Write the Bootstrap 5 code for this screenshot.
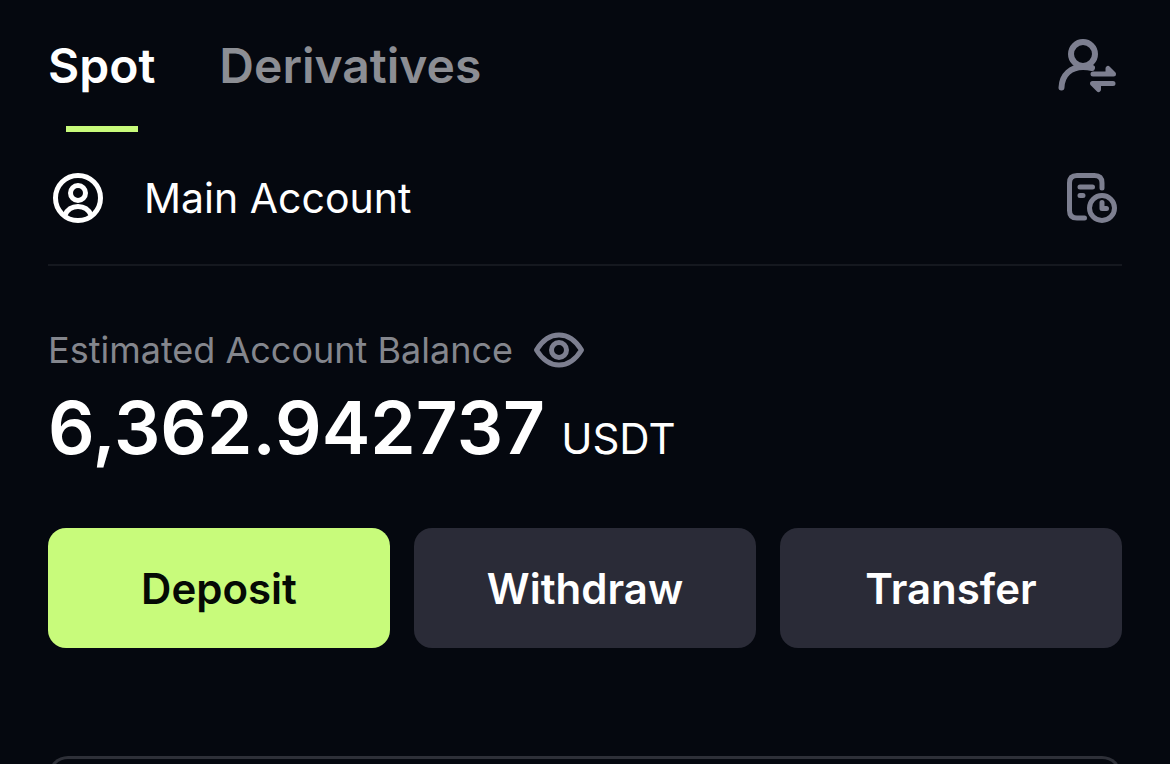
<!DOCTYPE html>
<html lang="en" data-bs-theme="dark">
<head>
<meta charset="utf-8">
<meta name="viewport" content="width=device-width, initial-scale=1">
<title>Spot Account</title>
<link rel="stylesheet" href="https://cdn.jsdelivr.net/npm/bootstrap@5.3.0/dist/css/bootstrap.min.css">
<style>
  html { scrollbar-width: none; }
  html::-webkit-scrollbar { display: none; }
  body { background: #05080f; color: #fff; font-family: Inter, "Liberation Sans", sans-serif; }
  .wallet { padding: 32px 48px 0; }
  .tabs { gap: 64px; }
  .tab-link { position: relative; color: #8c8e94; font-size: 48px; font-weight: 600; line-height: 68px; height: 100px; }
  .tab-link:hover { color: #fff; }
  .tab-link.active { color: #fff; }
  .tab-link.active::after { content: ""; position: absolute; bottom: 0; left: 50%; width: 72px; height: 6px; margin-left: -36px; background: #c8fb7b; }
  .icon-btn { color: #7d7f90; }
  .icon-btn svg, .avatar { display: block; }
  .account-row { height: 134px; border-bottom: 2px solid #15181f; }
  .account-name { font-size: 41px; line-height: 50px; gap: 38px; }
  .balance { padding-top: 62px; }
  .balance-label { color: #84868d; font-size: 36px; line-height: 44px; }
  .balance-value { margin-top: 12px; }
  .amount { font-size: 73px; font-weight: 600; line-height: 88px; }
  .unit { font-size: 42px; line-height: 48px; }
  .actions { gap: 24px; margin-top: 56px; }
  .action-btn { --bs-btn-color: #fff; --bs-btn-bg: #2a2b37; --bs-btn-hover-color: #fff; --bs-btn-hover-bg: #353746; height: 120px; font-size: 42px; font-weight: 600; border: 0; border-radius: 18px; }
  .action-btn.deposit { --bs-btn-color: #050a05; --bs-btn-bg: #c8fb7b; --bs-btn-hover-color: #050a05; --bs-btn-hover-bg: #b8ee68; }
  .assets-panel { margin-top: 108px; min-height: 96px; border: 3px solid #2e3038; border-bottom: 0; border-radius: 20px 20px 0 0; }
</style>
</head>
<body>
<main class="wallet d-flex flex-column min-vh-100">
  <header class="d-flex justify-content-between align-items-start">
    <nav class="tabs d-flex" aria-label="Account type">
      <a class="tab-link active text-decoration-none" href="#spot" aria-current="page">Spot</a>
      <a class="tab-link text-decoration-none" href="#derivatives">Derivatives</a>
    </nav>
    <button type="button" class="icon-btn btn border-0 p-0 mt-1" aria-label="Switch account">
      <svg width="64" height="60" viewBox="0 0 64 60" fill="none" stroke="currentColor" stroke-width="6" stroke-linecap="round" stroke-linejoin="round">
        <circle cx="25" cy="18" r="12"/>
        <path d="M3.500 51.500C4 38.500 13 31 25 31Q30 31 34 32"/>
        <path d="M35 38H55.500L50 32.500V38M55 47.500H34.500L40.500 53.500V47.500" stroke-width="5"/>
      </svg>
    </button>
  </header>

  <section class="account-row d-flex justify-content-between align-items-center">
    <div class="account-name d-flex align-items-center">
      <svg class="avatar" width="58" height="58" viewBox="0 0 58 58" fill="none" stroke="currentColor" stroke-width="5" aria-hidden="true">
        <circle cx="30" cy="29" r="22.500"/>
        <circle cx="30" cy="24" r="7.500"/>
        <path d="M17 46C20 39 24.500 37.500 30 37.500S40 39 43 46"/>
      </svg>
      <span>Main Account</span>
    </div>
    <button type="button" class="icon-btn btn border-0 p-0" aria-label="Transaction history">
      <svg width="58" height="58" viewBox="0 0 58 58" fill="none" stroke="currentColor" stroke-width="5" stroke-linecap="round" stroke-linejoin="round">
        <path d="M20.500 49H13Q5.500 49 5.500 41.500V14Q5.500 6.500 13 6.500H30.500Q38 6.500 38 14V19"/>
        <path d="M16 18H28.500M16 26.500H19"/>
        <circle cx="38" cy="39" r="12.500"/>
        <path d="M38 33.500V39.500H42.500"/>
      </svg>
    </button>
  </section>

  <section class="balance">
    <div class="d-flex align-items-center gap-3">
      <span class="balance-label">Estimated Account Balance</span>
      <button type="button" class="icon-btn btn border-0 p-0" aria-label="Hide balance">
        <svg width="60" height="40" viewBox="0 0 60 40" fill="none" stroke="currentColor" stroke-width="5" stroke-linejoin="round">
          <path d="M7.500 20C13 11 20 5 30 5S47 11 52.500 20C47 29 40 35 30 35S13 29 7.500 20Z"/>
          <circle cx="30" cy="20" r="7.500"/>
        </svg>
      </button>
    </div>
    <div class="balance-value d-flex align-items-baseline gap-3">
      <span class="amount">6,362.942737</span>
      <span class="unit">USDT</span>
    </div>
  </section>

  <div class="actions d-flex">
    <button type="button" class="action-btn deposit btn flex-fill w-100">Deposit</button>
    <button type="button" class="action-btn btn flex-fill w-100">Withdraw</button>
    <button type="button" class="action-btn btn flex-fill w-100">Transfer</button>
  </div>

  <section class="assets-panel flex-grow-1" aria-label="Assets"></section>
</main>
<script src="https://cdn.jsdelivr.net/npm/bootstrap@5.3.0/dist/js/bootstrap.bundle.min.js"></script>
</body>
</html>
